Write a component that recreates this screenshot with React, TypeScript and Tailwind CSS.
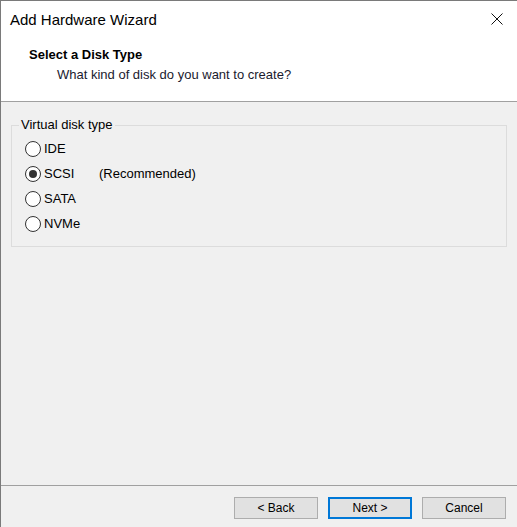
import { useState } from "react";

const DISK_TYPES = [
    { id: "ide", label: "IDE", note: "" },
    { id: "scsi", label: "SCSI", note: "(Recommended)" },
    { id: "sata", label: "SATA", note: "" },
    { id: "nvme", label: "NVMe", note: "" },
];

function Radio({ checked }: { checked: boolean }) {
    return (
        <span className="w-[16px] h-[16px] rounded-full border border-[#333] bg-white flex items-center justify-center shrink-0">
            {checked && <span className="w-[8px] h-[8px] rounded-full bg-[#333]" />}
        </span>
    );
}

function WizardButton({ label, primary }: { label: string; primary?: boolean }) {
    return (
        <button
            className={
                primary
                    ? "w-[84px] h-[22px] bg-[#e1e1e1] border-2 border-[#0078d7] text-[12px] text-black"
                    : "w-[84px] h-[22px] bg-[#e1e1e1] border border-[#adadad] text-[12px] text-black"
            }
        >
            {label}
        </button>
    );
}

export default function App() {
    const [selected, setSelected] = useState("scsi");

    return (
        <div
            className="w-[517px] h-[527px] bg-[#f0f0f0] border-l border-t border-[#7a7a7a] flex flex-col overflow-hidden"
            style={{ fontFamily: '"Liberation Sans", Arial, sans-serif' }}
        >
            {/* Header */}
            <div className="bg-white h-[101px] border-b border-[#a0a0a0] flex flex-col">
                <div className="flex items-center justify-between h-[38px] pl-[9px] pr-[14px]">
                    <span className="text-[15px] text-black mt-[1px]">Add Hardware Wizard</span>
                    <svg width="12" height="12" viewBox="0 0 12 12" className="-mt-[3px]">
                        <path d="M0.5 0.5 L11.5 11.5 M11.5 0.5 L0.5 11.5" stroke="#111" strokeWidth="1" />
                    </svg>
                </div>
                <div className="pl-[28px] pt-[8px] text-[13px] font-bold text-black leading-[16px]">Select a Disk Type</div>
                <div className="pl-[56px] pt-[4px] text-[13px] text-[#1a1a2e] leading-[16px]">
                    What kind of disk do you want to create?
                </div>
            </div>

            {/* Body */}
            <div className="flex-1 px-[10px] pt-[15px]">
                <fieldset className="border border-[#dcdcdc] h-[130px] pl-[13px] pr-0 pt-0">
                    <legend className="text-[13px] text-black px-[2px] -ml-[6px] leading-[16px]">Virtual disk type</legend>
                    <div className="flex flex-col gap-[9px] pt-[8px]">
                        {DISK_TYPES.map((t) => (
                            <label
                                key={t.id}
                                className="flex items-center h-[16px] text-[13px] text-black cursor-default"
                                onClick={() => setSelected(t.id)}
                            >
                                <Radio checked={selected === t.id} />
                                <span className="ml-[3px] w-[55px]">{t.label}</span>
                                {t.note && <span>{t.note}</span>}
                            </label>
                        ))}
                    </div>
                </fieldset>
            </div>

            {/* Footer */}
            <div className="border-t border-[#a0a0a0] h-[42px] flex items-start justify-end gap-[10px] pt-[11px] pr-[11px]">
                <WizardButton label="< Back" />
                <WizardButton label="Next >" primary />
                <WizardButton label="Cancel" />
            </div>
        </div>
    );
}
